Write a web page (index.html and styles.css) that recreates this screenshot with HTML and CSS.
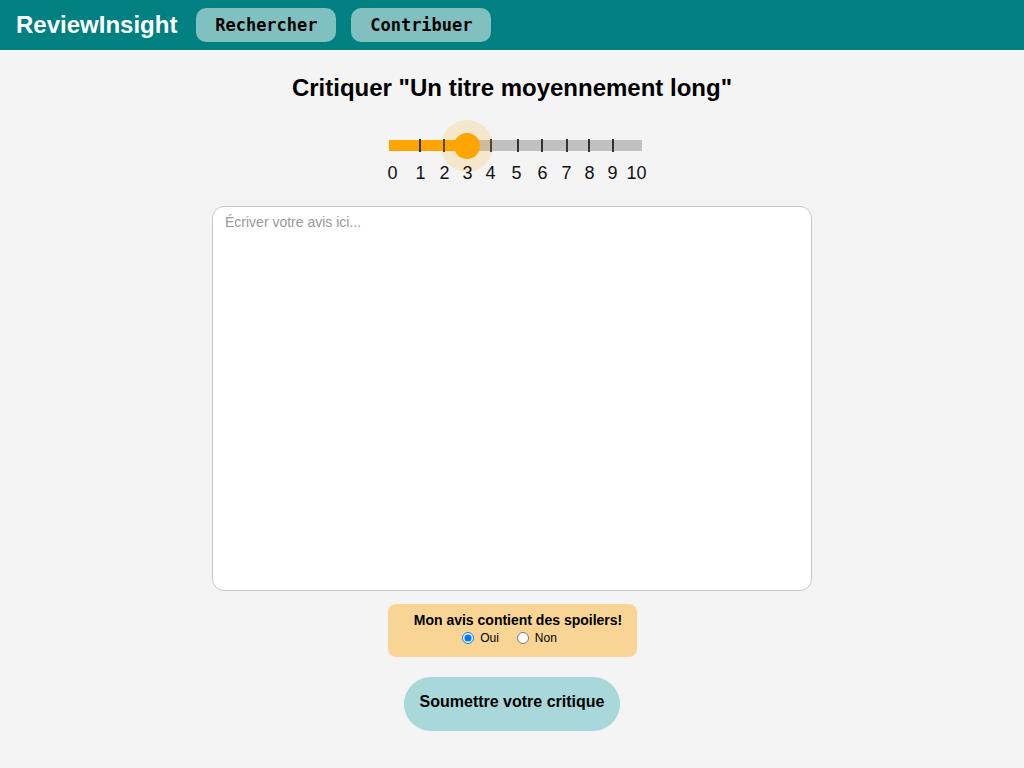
FILE: index.html
```html
<!DOCTYPE html>
<html lang="fr">
<head>
<meta charset="utf-8">
<title>ReviewInsight</title>
<link rel="stylesheet" href="styles.css">
</head>
<body>
<header class="topbar">
  <div class="brand">ReviewInsight</div>
  <nav class="nav">
    <button class="nav-btn">Rechercher</button>
    <button class="nav-btn">Contribuer</button>
  </nav>
</header>
<main class="main">
  <h1 class="title">Critiquer "Un titre moyennement long"</h1>
  <div class="slider">
    <div class="track">
      <div class="track-fill" style="width:31%"></div>
      <span class="tick" style="left:31px"></span>
      <span class="tick" style="left:55px"></span>
      <span class="tick" style="left:102px"></span>
      <span class="tick" style="left:129px"></span>
      <span class="tick" style="left:153px"></span>
      <span class="tick" style="left:178px"></span>
      <span class="tick" style="left:200px"></span>
      <span class="tick" style="left:224px"></span>
      <span class="halo" style="left:78px"></span>
      <span class="thumb" style="left:78px"></span>
    </div>
    <div class="labels">
      <span class="lbl" style="left:3px">0</span>
      <span class="lbl" style="left:31px">1</span>
      <span class="lbl" style="left:55px">2</span>
      <span class="lbl" style="left:78px">3</span>
      <span class="lbl" style="left:101px">4</span>
      <span class="lbl" style="left:127px">5</span>
      <span class="lbl" style="left:153px">6</span>
      <span class="lbl" style="left:177px">7</span>
      <span class="lbl" style="left:200px">8</span>
      <span class="lbl" style="left:223px">9</span>
      <span class="lbl" style="left:247px">10</span>
    </div>
  </div>
  <textarea class="review" placeholder="Écriver votre avis ici..."></textarea>
  <div class="spoiler">
    <div class="spoiler-title">Mon avis contient des spoilers!</div>
    <div class="spoiler-opts">
      <label class="opt"><input type="radio" name="sp" checked>Oui</label>
      <label class="opt"><input type="radio" name="sp">Non</label>
    </div>
  </div>
  <button class="submit">Soumettre votre critique</button>
</main>
</body>
</html>
```
FILE: styles.css
```css
html, body {
  margin: 0;
  padding: 0;
  background: #f4f4f4;
  font-family: "Liberation Sans", Arial, sans-serif;
  color: #000;
}

.topbar {
  height: 50px;
  background: #008080;
  display: flex;
  align-items: center;
  padding: 0 16px;
  box-sizing: border-box;
}

.brand {
  color: #fff;
  font-weight: bold;
  font-size: 24px;
  margin-right: 19px;
}

.nav {
  display: flex;
  gap: 15px;
}

.nav-btn {
  width: 140px;
  height: 34px;
  border: none;
  border-radius: 10px;
  background: #80c0c0;
  font-family: "DejaVu Sans Mono", monospace;
  font-weight: bold;
  font-size: 17px;
  color: #000;
  padding: 0;
  margin-top: -1px;
}

.main {
  display: flex;
  flex-direction: column;
  align-items: center;
}

.title {
  font-size: 24px;
  font-weight: bold;
  margin: 24px 0 0 0;
  line-height: 28px;
}

.slider {
  width: 259px;
  margin: 16px 0 0 8px;
  position: relative;
  height: 68px;
}

.track {
  position: absolute;
  left: 2px;
  top: 22px;
  width: 253px;
  height: 11px;
  background: #c0c0c0;
}

.track-fill {
  height: 100%;
  background: #ffa500;
}

.tick {
  position: absolute;
  top: -1px;
  width: 2px;
  height: 13px;
  margin-left: -1px;
  background: #333;
}

.halo {
  position: absolute;
  top: 50%;
  width: 52px;
  height: 52px;
  margin: -26px 0 0 -26px;
  border-radius: 50%;
  background: rgba(255, 165, 0, 0.16);
}

.thumb {
  position: absolute;
  top: 50%;
  width: 26px;
  height: 26px;
  margin: -13px 0 0 -13px;
  border-radius: 50%;
  background: #ffa500;
}

.labels {
  position: absolute;
  left: 3px;
  top: 44px;
  width: 100%;
  height: 22px;
}

.lbl {
  position: absolute;
  top: 0;
  font-size: 18px;
  line-height: 22px;
  transform: translateX(-50%);
  color: #111;
}

.review {
  display: block;
  margin-top: 20px;
  width: 600px;
  height: 385px;
  box-sizing: border-box;
  border: 1px solid #c8c8c8;
  border-radius: 12px;
  background: #fff;
  padding: 7px 12px;
  font-family: "Liberation Sans", Arial, sans-serif;
  font-size: 14px;
  resize: none;
  outline: none;
}

.review::placeholder {
  color: #999;
}

.spoiler {
  margin-top: 13px;
  width: 249px;
  height: 53px;
  box-sizing: border-box;
  background: #f8d595;
  border-radius: 8px;
  padding: 8px 0 0 0;
  display: flex;
  flex-direction: column;
  align-items: center;
}

.spoiler-title {
  font-weight: bold;
  font-size: 14px;
  line-height: 17px;
  padding-left: 12px;
}

.spoiler-opts {
  display: flex;
  gap: 18px;
  font-size: 12px;
  line-height: 16px;
  margin-top: 1px;
  padding-right: 5px;
}

.opt {
  display: flex;
  align-items: center;
}

.opt input {
  margin: 0 6px 0 0;
  width: 12px;
  height: 12px;
}

.submit {
  margin-top: 20px;
  width: 216px;
  height: 54px;
  border: none;
  border-radius: 27px;
  background: #a8d8d9;
  font-family: "Liberation Sans", Arial, sans-serif;
  font-weight: bold;
  font-size: 16px;
  color: #000;
  padding: 0 0 4px 0;
}
```
